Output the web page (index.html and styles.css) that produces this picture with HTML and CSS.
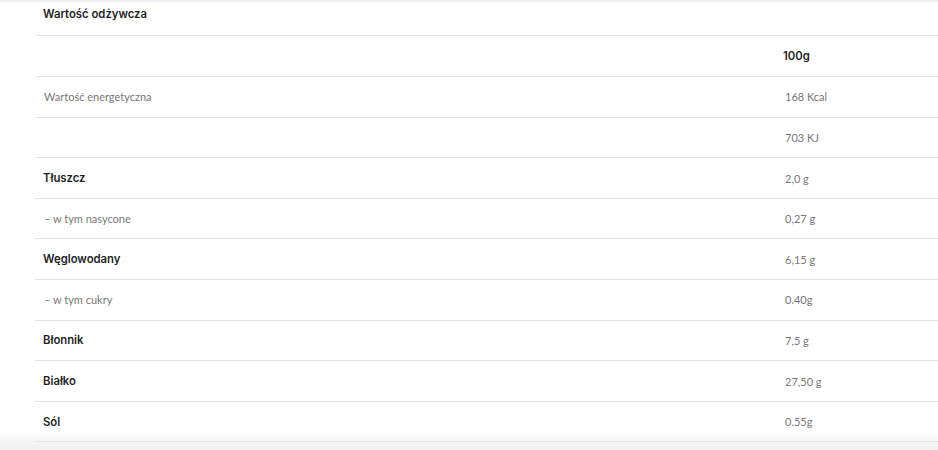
FILE: index.html
```html
<!DOCTYPE html>
<html lang="pl">
<head>
<meta charset="utf-8">
<title>Wartość odżywcza</title>
<link rel="stylesheet" href="styles.css">
</head>
<body>
<div class="page">
  <div class="panel">
    <div class="title">Wartość odżywcza</div>
    <table class="nutri">
      <tr><td class="name"></td><td class="val head">100g</td></tr>
      <tr><td class="name light">Wartość energetyczna</td><td class="val">168 Kcal</td></tr>
      <tr><td class="name light"></td><td class="val">703 KJ</td></tr>
      <tr><td class="name bold">Tłuszcz</td><td class="val">2,0 g</td></tr>
      <tr><td class="name light">– w tym nasycone</td><td class="val">0,27 g</td></tr>
      <tr><td class="name bold">Węglowodany</td><td class="val">6,15 g</td></tr>
      <tr><td class="name light">– w tym cukry</td><td class="val">0.40g</td></tr>
      <tr><td class="name bold">Błonnik</td><td class="val">7,5 g</td></tr>
      <tr><td class="name bold">Białko</td><td class="val">27,50 g</td></tr>
      <tr><td class="name bold">Sól</td><td class="val">0.55g</td></tr>
    </table>
  </div>
  <div class="fade-bottom"></div>
</div>
</body>
</html>
```

FILE: styles.css
```css
html, body {
  margin: 0;
  padding: 0;
  background: #fff;
}
.page {
  position: relative;
  width: 938px;
  height: 450px;
  overflow: hidden;
  background: linear-gradient(to bottom, #ececec 0px, #f7f7f7 2px, #ffffff 4px);
}
.panel {
  padding-left: 35px;
}
.title {
  height: 36px;
  box-sizing: border-box;
  padding: 6px 0 0 8px;
  font-family: Inter, "Noto Sans", sans-serif;
  font-weight: 600;
  font-size: 11.3px;
  line-height: 16px;
  color: #1f1f1f;
  border-bottom: 1px solid #e4e4e4;
}
.nutri {
  width: 903px;
  border-collapse: collapse;
  border-spacing: 0;
}
.nutri td {
  height: 40.6px;
  box-sizing: border-box;
  padding: 0 8px;
  border-bottom: 1px solid #e4e4e4;
  vertical-align: middle;
  font-family: Lato, "Open Sans", sans-serif;
  font-size: 11px;
  color: #777;
  white-space: nowrap;
}
.nutri td.name {
  width: 740px;
}
.nutri td.light {
  padding-left: 9px;
}
.nutri td.bold,
.nutri td.head {
  font-family: Inter, "Noto Sans", sans-serif;
  font-weight: 600;
  font-size: 11.3px;
  color: #1f1f1f;
}
.nutri td.val {
  padding-left: 10px;
}
.nutri td.head {
  padding-left: 8px;
}
.nutri tr:last-child td {
  border-bottom-color: #d2d2d2;
}
.fade-bottom {
  position: absolute;
  left: 0;
  right: 0;
  bottom: 0;
  height: 16px;
  background: linear-gradient(to bottom, rgba(240,240,240,0) 0%, rgba(240,240,240,0.6) 40%, rgba(238,238,238,0.9) 100%);
  pointer-events: none;
}
```
